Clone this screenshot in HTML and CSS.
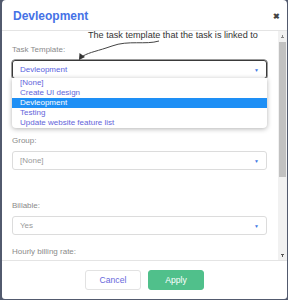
FILE: index.html
```html
<!DOCTYPE html>
<html lang="en">

<head>
	<meta charset="UTF-8">
	<meta name="viewport" content="width=device-width, initial-scale=1.0">
	<link rel="stylesheet" href="styles.css">
	<title>Devleopment</title>
</head>

<body>
	<div class="modal">
		<div class="modal-head">
			<h2 class="modal-title">Devleopment</h2>
			<span class="modal-close">&#10006;</span>
		</div>

		<div class="modal-body">
			<div class="body-inner">
				<div class="field field-task">
					<label class="field-label">Task Template:</label>
					<div class="select select-open">
						<span class="select-value">Devleopment</span>
						<span class="select-arrow">&#9660;</span>
						<ul class="select-list">
							<li>[None]</li>
							<li>Create UI design</li>
							<li class="selected">Devleopment</li>
							<li>Testing</li>
							<li>Update website feature list</li>
						</ul>
					</div>
				</div>

				<div class="field field-group">
					<label class="field-label">Group:</label>
					<div class="select">
						<span class="select-value muted">[None]</span>
						<span class="select-arrow">&#9660;</span>
					</div>
				</div>

				<div class="field field-billable">
					<label class="field-label">Billable:</label>
					<div class="select">
						<span class="select-value muted">Yes</span>
						<span class="select-arrow">&#9660;</span>
					</div>
				</div>

				<div class="field">
					<label class="field-label">Hourly billing rate:</label>
				</div>
			</div>

			<div class="scrollbar">
				<span class="scroll-btn scroll-up"></span>
				<div class="scroll-track">
					<span class="scroll-thumb"></span>
				</div>
				<span class="scroll-btn scroll-down"></span>
			</div>
		</div>

		<div class="modal-foot">
			<button class="btn btn-cancel" type="button">Cancel</button>
			<button class="btn btn-apply" type="button">Apply</button>
		</div>

		<!-- annotation over the form -->
		<div class="note">
			<span class="note-text">The task template that the task is linked to</span>
			<svg class="note-arrow" width="100" height="24" viewBox="0 0 100 24">
				<path d="M93 1 C 80 5, 62 0, 46 6 C 32 11, 24 12, 17 16" fill="none" stroke="#444" stroke-width="1"/>
				<path d="M13 20 L 13.5 13 L 19 17 Z" fill="#333"/>
			</svg>
		</div>
	</div>
</body>

</html>
```

FILE: styles.css
```css
* {
	box-sizing: border-box;
}

html,
body {
	margin: 0;
	height: 300px;
	overflow: hidden;
}

body {
	background: #525a6e;
	font-family: "Liberation Sans", Arial, sans-serif;
}

.modal {
	position: relative;
	width: 285px;
	height: 299px;
	margin-left: 2px;
	background: #fff;
	border-radius: 4px 4px 3px 3px;
	display: flex;
	flex-direction: column;
}

.modal-head {
	height: 31px;
	padding: 2px 7px 0 11px;
	display: flex;
	align-items: center;
	justify-content: space-between;
	border-bottom: 1px solid #e4e4e4;
	flex: none;
}

.modal-title {
	margin: 0;
	font-size: 12px;
	line-height: 14px;
	font-weight: bold;
	color: #4572e6;
}

.modal-close {
	font-size: 8px;
	color: #444;
	font-weight: bold;
}

.modal-body {
	height: 229px;
	flex: none;
	display: flex;
}

.body-inner {
	flex: 1;
	overflow: hidden;
	padding: 13px 11px 0 10px;
}

/* fake scrollbar, the page is shot without real ones */
.scrollbar {
	width: 9px;
	background: #f1f1f1;
	display: flex;
	flex-direction: column;
}

.scroll-btn {
	height: 10px;
	background-repeat: no-repeat;
	background-size: 5px 3px;
	background-position: center;
}

.scroll-up {
	background-image: conic-gradient(from 150deg at 50% 0, #888 60deg, transparent 0);
}

.scroll-down {
	background-image: conic-gradient(from -30deg at 50% 100%, #555 60deg, transparent 0);
}

.scroll-track {
	flex: 1;
	padding-top: 1px;
}

.scroll-thumb {
	display: block;
	height: 135px;
	margin: 0 1px;
	background: #c1c1c1;
}

.field {
	margin-top: 11px;
}

.field-task {
	margin-top: 0;
}

.field-group {
	margin-top: 56px;
}

.field-billable {
	margin-top: 30px;
}

.field-label {
	display: block;
	font-size: 8px;
	line-height: 12px;
	color: #8a8a8a;
	margin-bottom: 4px;
}

.select {
	position: relative;
	height: 19px;
	padding: 0 7px;
	border: 1px solid #dcdcdc;
	border-radius: 3px;
	display: flex;
	align-items: center;
	justify-content: space-between;
	font-size: 8px;
}

.select-open {
	border: 1px solid #3a3a3a;
	box-shadow: 0 0 0 0.5px #3a3a3a;
	border-radius: 3px;
}

.select-value {
	color: #5a63e0;
}

.select-value.muted {
	color: #9a9a9a;
}

.select-arrow {
	font-size: 5px;
	color: #3f7be4;
}

.select-list {
	position: absolute;
	top: 100%;
	left: -1px;
	right: -1px;
	margin: 0;
	padding: 0;
	list-style: none;
	background: #fff;
	border-radius: 0 0 4px 4px;
	box-shadow: 0 1px 5px rgba(0, 0, 0, 0.3);
	z-index: 2;
}

.select-list li {
	height: 10px;
	line-height: 10px;
	padding-left: 8px;
	color: #6464da;
}

.select-list li.selected {
	background: #1e8ff5;
	color: #fff;
}

.modal-foot {
	flex: 1;
	border-top: 1px solid #e4e4e4;
	display: flex;
	justify-content: center;
	gap: 7px;
	padding-top: 9px;
}

.btn {
	width: 56px;
	height: 20px;
	border-radius: 3px;
	font-family: "Liberation Sans", Arial, sans-serif;
	font-size: 8.6px;
	cursor: pointer;
}

.btn-cancel {
	background: #fff;
	border: 1px solid #e2e2e2;
	color: #6868dc;
}

.btn-apply {
	background: #50c08b;
	border: 1px solid #50c08b;
	color: #fff;
}

.note {
	position: absolute;
	top: 30px;
	left: 64px;
	width: 200px;
	height: 34px;
}

.note-text {
	position: absolute;
	left: 22px;
	top: 0;
	font-size: 9.1px;
	line-height: 10px;
	color: #333;
	white-space: nowrap;
}

.note-arrow {
	position: absolute;
	left: 0;
	top: 10px;
}
```
